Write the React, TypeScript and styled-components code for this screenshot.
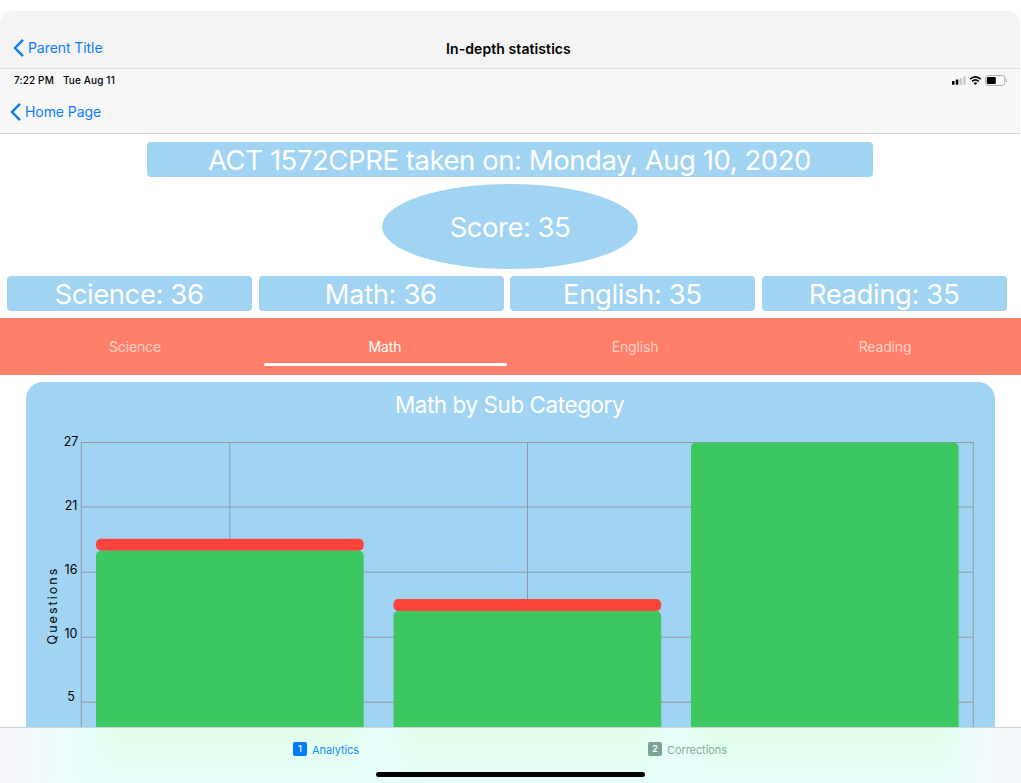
import React from "react";
import styled, { createGlobalStyle } from "styled-components";

const GlobalStyle = createGlobalStyle`
  *, *::before, *::after { box-sizing: border-box; }
  body { margin: 0; background: #fff; font-family: Inter, "Liberation Sans", sans-serif; }
`;

const Screen = styled.div`
  width: 1021px;
  height: 783px;
  overflow: hidden;
  display: flex;
  flex-direction: column;
  padding-top: 11px;
  background: #fff;
`;

const ParentHeader = styled.header`
  flex: none;
  height: 58px;
  width: 1020px;
  display: grid;
  grid-template-columns: 1fr auto 1fr;
  align-items: center;
  padding: 17px 16px 0 13px;
  background: #f4f4f4;
  border-radius: 12px 12px 0 0;
  border-bottom: 1px solid #d9d9d9;
`;

const BackLink = styled.a`
  display: flex;
  align-items: center;
  gap: 4px;
  color: #0a7dff;
  font-size: 14px;
  line-height: 20px;
  letter-spacing: -0.07px;
`;

const PageTitle = styled.h1`
  margin: 0;
  padding-top: 1px;
  font-size: 14px;
  line-height: 20px;
  font-weight: 600;
  letter-spacing: 0.08px;
  color: #000;
`;

const ChildHeader = styled.header`
  flex: none;
  height: 65px;
  width: 1020px;
  background: #f7f7f7;
  border-bottom: 1px solid #d1d1d2;
  padding: 5px 13px 0 10px;
`;

const StatusBar = styled.div`
  display: flex;
  justify-content: space-between;
  height: 13px;
  padding-left: 4px;
  font-size: 10px;
  line-height: 13px;
  font-weight: 500;
  letter-spacing: 0.14px;
  color: #000;
`;

const StatusText = styled.div`
  display: flex;
  gap: 9px;
`;

const BackRow = styled.div`
  padding-top: 15px;
`;

const Summary = styled.section`
  flex: none;
  width: 1020px;
  padding: 8px 13px 7px 7px;
  display: flex;
  flex-direction: column;
  align-items: center;
  gap: 7px;
`;

const Banner = styled.div<{ $width?: number; $spacing?: number }>`
  width: ${(p) => (p.$width ? p.$width + "px" : "auto")};
  height: 35px;
  padding-right: 1px;
  border-radius: 4px;
  background: #a1d3f3;
  color: #fff;
  text-align: center;
  font-size: 27.5px;
  line-height: 36px;
  font-weight: 400;
  letter-spacing: ${(p) => p.$spacing ?? 0}px;
  white-space: nowrap;
`;

const TestBanner = styled(Banner)`
  margin-left: 6px;
`;

const Score = styled.div`
  width: 256px;
  height: 85px;
  margin-left: 6px;
  border-radius: 50%;
  background: #a1d3f3;
  color: #fff;
  text-align: center;
  font-size: 27.5px;
  line-height: 86px;
  font-weight: 400;
  letter-spacing: -0.5px;
`;

const ScoreGrid = styled.div`
  width: 1000px;
  display: grid;
  grid-template-columns: repeat(4, 1fr);
  gap: 6.7px;
`;

const Tabs = styled.nav`
  flex: none;
  width: 1020.5px;
  height: 57px;
  padding: 0 10.5px 0 10px;
  display: grid;
  grid-template-columns: repeat(4, 1fr);
  background: #ff7f69;
`;

const Tab = styled.a<{ $active?: boolean }>`
  display: flex;
  flex-direction: column;
  justify-content: space-between;
  align-items: center;
  padding: 19px 3px 9px;
  font-size: 14px;
  line-height: 20px;
  letter-spacing: -0.15px;
  color: ${(p) => (p.$active ? "#fff" : "rgba(255,255,255,0.65)")};
`;

const Underline = styled.span`
  width: 243px;
  height: 3px;
  border-radius: 2px;
  background: #fff;
`;

const ChartArea = styled.main`
  flex: 1;
  min-height: 0;
  overflow: hidden;
  padding: 6.5px 26px 0;
`;

const ChartCard = styled.section`
  height: 400px;
  width: 969px;
  border-radius: 17px 17px 0 0;
  background: #a1d3f3;
`;

const ChartTitle = styled.h2`
  margin: 0;
  padding: 7px 2px 0 0;
  height: 43.5px;
  text-align: center;
  font-size: 22.5px;
  line-height: 32px;
  font-weight: 400;
  letter-spacing: -0.45px;
  color: #fff;
`;

const Plot = styled.svg`
  display: block;
  font-family: Inter, "Liberation Sans", sans-serif;
  font-size: 12.5px;
`;

const BottomBar = styled.footer`
  flex: none;
  position: relative;
  height: 56px;
  border-top: 1px solid #ccd8d8;
  overflow: hidden;
`;

const Backdrop = styled.svg`
  position: absolute;
  inset: 0;
`;

const BottomItems = styled.div`
  position: relative;
  height: 44px;
  display: grid;
  grid-template-columns: 293px 355px 1fr;
`;

const BottomItem = styled.a<{ $color: string }>`
  display: flex;
  align-items: center;
  gap: 5px;
  font-size: 11px;
  letter-spacing: -0.08px;
  color: ${(p) => p.$color};
`;

const NumberBadge = styled.span<{ $color: string }>`
  width: 14px;
  height: 14px;
  margin-top: -2px;
  border-radius: 2px;
  background: ${(p) => p.$color};
  color: #fff;
  font-size: 9.5px;
  line-height: 14px;
  font-weight: 500;
  text-align: center;
`;

const HomeIndicator = styled.div`
  position: relative;
  width: 269px;
  height: 5px;
  margin: -0.5px auto 0;
  border-radius: 3px;
  background: #000;
`;

const Chevron = () => (
  <svg width="11" height="18" viewBox="0 0 11 18" fill="none">
    <path d="M10 .9 2 9l8 8.1" stroke="#087cff" strokeWidth="2.4" />
  </svg>
);

const StatusIcons = () => (
  <svg width="56" height="13" viewBox="0 0 56 13">
    <rect x="1" y="7" width="2.5" height="3.7" rx=".5" />
    <rect x="4.8" y="5.6" width="2.5" height="5.1" rx=".5" />
    <rect x="8.5" y="4" width="2.5" height="6.7" rx=".5" fill="#c8c8c8" />
    <rect x="12.2" y="2.2" width="2.5" height="8.5" rx=".5" fill="#c8c8c8" />
    <g fill="none" stroke="#000" strokeWidth="1.6">
      <path d="M19 5.2q5.4-4.8 10.8 0M21 7.3q3.4-2.9 6.8 0" />
    </g>
    <path d="M24.4 11l-1.9-1.9q1.9-1.5 3.8 0z" />
    <rect x="34.5" y="1.6" width="19.3" height="9.8" rx="2.5" fill="#fff" stroke="#aaa" />
    <rect x="35.8" y="3" width="9" height="7" rx="1.2" />
    <path d="M54.8 5v3q1.2-.4 1.2-1.5T54.8 5z" fill="#aaa" />
  </svg>
);

const scores = [
  ["Science", 36],
  ["Math", 36],
  ["English", 35],
  ["Reading", 35],
] as const;

const ticks = [
  { label: 27, y: 17.5 },
  { label: 21, y: 82 },
  { label: 16, y: 147.2 },
  { label: 10, y: 212.2 },
  { label: 5, y: 277.2 },
];

const bars = [
  { x: 70, wrong: 113.7, top: 125.8 },
  { x: 367.5, wrong: 174, top: 186 },
  { x: 665, wrong: null, top: 17.5 },
];

const Chart = () => (
  <Plot width="969" height="356" viewBox="0 0 969 356">
    <g stroke="#8f9aa3" fill="none">
      {ticks.map((t) => (
        <line key={t.label} x1="55" x2="947.5" y1={t.y} y2={t.y} />
      ))}
      {[55.3, 203.8, 501.5, 799.2, 947.3].map((x) => (
        <line key={x} x1={x} x2={x} y1="17" y2="356" />
      ))}
    </g>
    <g textAnchor="middle" fill="#000">
      {ticks.map((t, i) => (
        <text key={t.label} x="45" y={21.2 + i * 63.8}>
          {t.label}
        </text>
      ))}
      <text x="0" y="0" letterSpacing="2.05" transform="translate(31 180.5) rotate(-90)">
        Questions
      </text>
    </g>
    {bars.map((b) => (
      <g key={b.x}>
        {b.wrong !== null && (
          <rect x={b.x} y={b.wrong} width="267.7" height="12.1" rx="5" fill="#ff3f37" fillOpacity=".97" />
        )}
        <rect x={b.x} y={b.top} width="267.7" height="400" rx="5" fill="#39c65b" fillOpacity=".97" />
      </g>
    ))}
  </Plot>
);

const FrostedBackdrop = () => (
  <Backdrop width="1021" height="56">
    <defs>
      <linearGradient id="side" x1="0" x2="1">
        <stop offset="0" stopColor="#f6f6fa" />
        <stop offset=".025" stopColor="#f4f9fc" />
        <stop offset=".08" stopColor="#e9ffff" />
        <stop offset=".92" stopColor="#e9ffff" />
        <stop offset=".975" stopColor="#f4fafc" />
        <stop offset="1" stopColor="#f3f6fa" />
      </linearGradient>
      <linearGradient id="green" x1="0" x2="0" y1="0" y2="1">
        <stop offset="0" stopColor="#e0fde3" />
        <stop offset=".5" stopColor="#e2fdeb" />
        <stop offset="1" stopColor="#e6fffa" />
      </linearGradient>
      <filter id="soft" x="-20%" y="-40%" width="140%" height="180%" colorInterpolationFilters="sRGB">
        <feGaussianBlur stdDeviation="14 8" />
      </filter>
    </defs>
    <rect width="1021" height="56" fill="url(#side)" />
    {bars.map((b) => (
      <rect key={b.x} x={b.x + 28} y="-30" width="264" height="84" rx="16" fill="url(#green)" filter="url(#soft)" />
    ))}
  </Backdrop>
);

export default function App() {
  return (
    <>
      <GlobalStyle />
      <Screen>
        <ParentHeader>
          <BackLink><Chevron />Parent Title</BackLink>
          <PageTitle>In-depth statistics</PageTitle>
        </ParentHeader>
        <ChildHeader>
          <StatusBar>
            <StatusText><span>7:22 PM</span><span>Tue Aug 11</span></StatusText>
            <StatusIcons />
          </StatusBar>
          <BackRow>
            <BackLink><Chevron />Home Page</BackLink>
          </BackRow>
        </ChildHeader>
        <Summary>
          <TestBanner $width={726} $spacing={-0.44}>ACT 1572CPRE taken on: Monday, Aug 10, 2020</TestBanner>
          <Score>Score: 35</Score>
          <ScoreGrid>
            {scores.map(([name, value]) => (
              <Banner key={name} $spacing={-0.42}>{name}: {value}</Banner>
            ))}
          </ScoreGrid>
        </Summary>
        <Tabs>
          {scores.map(([name]) => (
            <Tab key={name} $active={name === "Math"}>
              {name}
              {name === "Math" && <Underline />}
            </Tab>
          ))}
        </Tabs>
        <ChartArea>
          <ChartCard>
            <ChartTitle>Math by Sub Category</ChartTitle>
            <Chart />
          </ChartCard>
        </ChartArea>
        <BottomBar>
          <FrostedBackdrop />
          <BottomItems>
            <span />
            <BottomItem $color="#168bff"><NumberBadge $color="#007aff">1</NumberBadge>Analytics</BottomItem>
            <BottomItem $color="#82ad99"><NumberBadge $color="#7ba593">2</NumberBadge>Corrections</BottomItem>
          </BottomItems>
          <HomeIndicator />
        </BottomBar>
      </Screen>
    </>
  );
}
